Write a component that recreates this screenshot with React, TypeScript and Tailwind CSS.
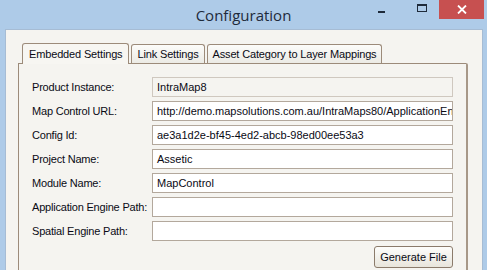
const rows: { label: string; value: string; readOnly?: boolean }[] = [
  { label: 'Product Instance:', value: 'IntraMap8', readOnly: true },
  { label: 'Map Control URL:', value: 'http://demo.mapsolutions.com.au/IntraMaps80/ApplicationEngine/' },
  { label: 'Config Id:', value: 'ae3a1d2e-bf45-4ed2-abcb-98ed00ee53a3' },
  { label: 'Project Name:', value: 'Assetic' },
  { label: 'Module Name:', value: 'MapControl' },
  { label: 'Application Engine Path:', value: '' },
  { label: 'Spatial Engine Path:', value: '' },
];

const tabs = ['Embedded Settings', 'Link Settings', 'Asset Category to Layer Mappings'];

export default function App() {
  return (
    <div className="w-[487px] h-[270px] overflow-hidden bg-[#aecbe8] flex flex-col font-['Liberation_Sans',Arial,sans-serif] text-[11px] text-[#0a0a14]">
      <div className="h-[29px] shrink-0 relative flex justify-center">
        <span className="mt-[4px] text-[15px] text-[#1e2a3a] font-['Open_Sans','Noto_Sans',sans-serif]">
          Configuration
        </span>
        <div className="absolute top-0 right-[3px] flex items-start">
          <div className="w-[27px] h-[19px] flex items-center justify-center mr-[14px]">
            <div className="w-[7px] h-[2px] bg-[#1e2a3a] mt-[4px]" />
          </div>
          <div className="w-[26px] h-[19px] flex items-center justify-center mr-[4px]">
            <div className="w-[10px] h-[8px] border border-t-2 border-[#1e2a3a] -mt-[4px]" />
          </div>
          <div className="w-[45px] h-[19px] bg-[#c75050] flex items-center justify-center">
            <svg width="10" height="9" viewBox="0 0 10 9">
              <path d="M1 0.5 L9 8.5 M9 0.5 L1 8.5" stroke="white" strokeWidth="1.8" />
            </svg>
          </div>
        </div>
      </div>
      <div className="ml-[5px] w-[478px] flex-1 bg-[#f5f4f0] border-t border-x border-[#a6bcd4] pl-[12px] pt-[12px]">
        <div className="flex items-end pl-[4px] h-[21px] tracking-[-0.15px]">
          {tabs.map((t, i) => (
            <div
              key={t}
              className={
                i === 0
                  ? 'h-[21px] px-[6px] mr-[2px] rounded-t-[3px] border border-b-0 border-[#9c8b7a] bg-[#f7f6f2] flex items-center relative z-10 -mb-[1px]'
                  : 'h-[19px] px-[5px] mr-[2px] rounded-t-[3px] border border-b-0 border-[#9c8b7a] bg-gradient-to-b from-[#fcfcfa] to-[#ecebe5] flex items-center'
              }
            >
              {t}
            </div>
          ))}
        </div>
        <div className="w-[450px] h-[300px] border-l border-t border-r-2 border-[#9c8b7a] border-r-[#a79888] rounded-tr-[2px] pl-[13px] pt-[13px] pr-[13px]">
          <div className="flex flex-col gap-[4px]">
            {rows.map((r) => (
              <div key={r.label} className="flex items-center h-[20px]">
                <span className="w-[120px] shrink-0 tracking-[-0.2px]">{r.label}</span>
                <div
                  className={
                    'w-[301px] h-[20px] border border-[#b3a89c] px-[4px] flex items-center overflow-hidden whitespace-nowrap ' +
                    (r.readOnly ? 'bg-[#f5f4f0] border-[#cfc8bf]' : 'bg-white')
                  }
                >
                  {r.value}
                </div>
              </div>
            ))}
          </div>
          <div className="flex justify-end mt-[5px] w-[421px]">
            <button className="w-[79px] h-[22px] rounded-[3px] border border-[#8b7b6b] bg-gradient-to-b from-[#fdfdfb] to-[#e8e5dc] text-[11px]">
              Generate File
            </button>
          </div>
        </div>
      </div>
    </div>
  );
}
